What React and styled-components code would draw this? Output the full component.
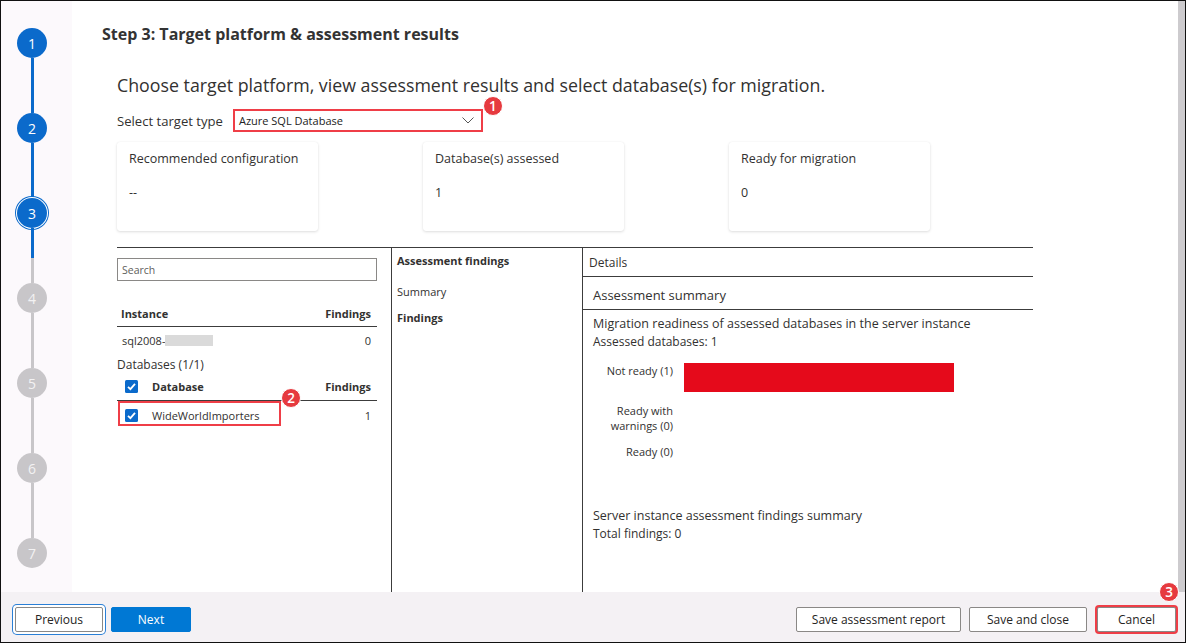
import styled, { createGlobalStyle } from 'styled-components';

const GlobalStyle = createGlobalStyle`
  html, body {
    margin: 0;
    padding: 0;
    background: #ffffff;
  }
  * {
    box-sizing: border-box;
  }
  body {
    font-family: "Open Sans", "Noto Sans", sans-serif;
    color: #323130;
  }
`;

const Frame = styled.div`
  width: 1186px;
  height: 643px;
  border: 1px solid #111;
  display: flex;
  flex-direction: column;
  overflow: hidden;
`;

const Body = styled.div`
  flex: 1;
  display: flex;
  min-height: 0;
`;

const Stepper = styled.div`
  width: 71px;
  background: #fcf9fc;
  display: flex;
  flex-direction: column;
  align-items: flex-start;
  padding: 27px 0 0 16px;
`;

const Step = styled.div`
  width: 30px;
  display: flex;
  flex-direction: column;
  align-items: center;
`;

const StepCircle = styled.div`
  width: 30px;
  height: 30px;
  border-radius: 50%;
  display: flex;
  align-items: center;
  justify-content: center;
  font-size: 14px;
  color: ${(p) => (p.$done ? '#ffffff' : '#f3f2f3')};
  background: ${(p) => (p.$done ? '#0b6acb' : '#c8c6c9')};
  box-shadow: ${(p) => (p.$current ? '0 0 0 1px #ffffff, 0 0 0 2px #0b6acb' : 'none')};
  flex-shrink: 0;
`;

const Connector = styled.div`
  width: 3px;
  height: 55px;
  background: ${(p) => p.$fill};
`;

const Main = styled.div`
  flex: 1;
  display: flex;
  flex-direction: column;
  padding: 23px 0 0 30px;
  min-width: 0;
`;

const Scrollbar = styled.div`
  width: 7px;
  background: #cdcbce;
`;

const StepTitle = styled.div`
  font-size: 16px;
  font-weight: 700;
  line-height: 20px;
  color: #333;
`;

const Content = styled.div`
  flex: 1;
  display: flex;
  flex-direction: column;
  margin-left: 15px;
  padding-top: 30px;
  min-height: 0;
`;

const Heading = styled.div`
  font-size: 17.8px;
  line-height: 22px;
  color: #323130;
`;

const SelectRow = styled.div`
  display: flex;
  align-items: center;
  gap: 10px;
  margin-top: 13px;
  font-size: 13.1px;
`;

const SelectBox = styled.div`
  position: relative;
  width: 250px;
  height: 23px;
  border: 2px solid #ef3e47;
  display: flex;
  align-items: center;
  justify-content: space-between;
  padding: 0 7px 0 4px;
  font-size: 11px;
  color: #222;
`;

const Badge = styled.div`
  position: absolute;
  width: 20px;
  height: 20px;
  border-radius: 50%;
  background: #e63a3f;
  border: 1px solid #ffffff;
  color: #ffffff;
  font-size: 13.5px;
  font-weight: 600;
  display: flex;
  align-items: center;
  justify-content: center;
  top: ${(p) => p.$top}px;
  right: ${(p) => p.$right}px;
`;

const Cards = styled.div`
  display: flex;
  gap: 105px;
  margin-top: 10px;
`;

const Card = styled.div`
  width: 201px;
  height: 89px;
  border-radius: 3px;
  background: #ffffff;
  box-shadow: 0 1px 3px rgba(0, 0, 0, 0.13), 0 0 1px rgba(0, 0, 0, 0.08);
  padding: 8px 12px;
  font-size: 12.5px;
  display: flex;
  flex-direction: column;
  gap: 17px;
`;

const Panels = styled.div`
  flex: 1;
  width: 916px;
  margin-top: 16px;
  border-top: 1px solid #3c3c3c;
  display: flex;
  min-height: 0;
`;

const LeftPane = styled.div`
  width: 275px;
  border-right: 1px solid #3c3c3c;
  padding: 10px 14px 0 0;
  font-size: 11px;
`;

const Search = styled.div`
  height: 23px;
  border: 1px solid #8a8886;
  padding: 0 4px;
  display: flex;
  align-items: center;
  color: #605e5c;
  font-size: 10.5px;
`;

const TableHead = styled.div`
  display: flex;
  align-items: center;
  justify-content: space-between;
  border-bottom: 1px solid #3c3c3c;
  height: ${(p) => p.$h}px;
  margin-top: ${(p) => p.$mt}px;
  padding: 0 6px 0 ${(p) => p.$pl}px;
  font-weight: 700;
  width: 260px;
`;

const TableRow = styled.div`
  display: flex;
  align-items: center;
  justify-content: space-between;
  height: ${(p) => p.$h}px;
  padding: 0 6px 0 ${(p) => p.$pl}px;
  width: 260px;
  position: relative;
`;

const Cell = styled.div`
  display: flex;
  align-items: center;
  gap: ${(p) => p.$gap || 0}px;
`;

const Redacted = styled.span`
  display: inline-block;
  width: 48px;
  height: 11px;
  background: #dadada;
`;

const GroupLabel = styled.div`
  font-size: 12px;
  margin-top: 4px;
  line-height: 16px;
`;

const Highlight = styled.div`
  position: absolute;
  left: 1px;
  top: 0;
  width: 163px;
  height: 25px;
  border: 2px solid #ef3e47;
`;

const MidPane = styled.div`
  width: 191px;
  border-right: 1px solid #3c3c3c;
  padding: 5px 5px;
  font-size: 11px;
  display: flex;
  flex-direction: column;
  gap: 11px;
`;

const NavItem = styled.div`
  font-weight: ${(p) => (p.$bold ? 700 : 400)};
  line-height: 15px;
  margin-top: ${(p) => p.$mt || 0}px;
`;

const DetailsPane = styled.div`
  flex: 1;
  display: flex;
  flex-direction: column;
`;

const DetailsHead = styled.div`
  height: 29px;
  border-bottom: 1px solid #3c3c3c;
  padding: 0 6px;
  display: flex;
  align-items: center;
  font-size: 12px;
`;

const SummaryHead = styled.div`
  height: 33px;
  border-bottom: 1px solid #3c3c3c;
  padding: 3px 10px 0 10px;
  display: flex;
  align-items: center;
  font-size: 13px;
`;

const Summary = styled.div`
  padding: 5px 10px;
  font-size: 12.5px;
  line-height: 18px;
`;

const SubLine = styled.div`
  font-size: 12px;
`;

const Chart = styled.div`
  display: grid;
  grid-template-columns: 80px 270px;
  column-gap: 11px;
  row-gap: 11px;
  margin-top: 12px;
  font-size: 11px;
  line-height: 15px;
`;

const ChartLabel = styled.div`
  text-align: right;
`;

const Bar = styled.div`
  height: ${(p) => p.$h}px;
  background: #e50a1b;
`;

const FindingsSummary = styled.div`
  margin-top: 48px;
`;

const Footer = styled.div`
  height: 50px;
  background: #f4f1f4;
  display: flex;
  align-items: center;
  padding: 4px 9px 0 14px;
  gap: 8px;
`;

const Spacer = styled.div`
  flex: 1;
`;

const Button = styled.button`
  position: relative;
  height: 25px;
  width: ${(p) => p.$w}px;
  margin-right: ${(p) => p.$mr || 0}px;
  font-family: inherit;
  font-size: 12px;
  border-radius: 2px;
  border: 1px solid ${(p) => (p.$primary ? '#0078d4' : '#8a8886')};
  background: ${(p) => (p.$primary ? '#0078d4' : '#ffffff')};
  color: ${(p) => (p.$primary ? '#ffffff' : '#252423')};
  box-shadow: ${(p) =>
    p.$focused ? '0 0 0 2px #ffffff, 0 0 0 3px #2a7fd6' : p.$flagged ? '0 0 0 2px #ef3e47' : 'none'};
  padding: 0;
`;

const Check = () => (
  <svg width="13" height="13" viewBox="0 0 13 13">
    <rect x="0" y="0" width="13" height="13" rx="1.5" fill="#0b6acb" />
    <path d="M3 6.8 L5.4 9.1 L10 3.9" stroke="#ffffff" strokeWidth="1.8" fill="none" />
  </svg>
);

const Chevron = () => (
  <svg width="12" height="7" viewBox="0 0 12 7">
    <path d="M0.5 0.5 L6 6 L11.5 0.5" stroke="#444" strokeWidth="0.9" fill="none" />
  </svg>
);

const steps = [1, 2, 3, 4, 5, 6, 7];

const connectorFill = (n) => {
  if (n < 3) return '#0b6acb';
  if (n === 3) return 'linear-gradient(#0b6acb 0 30px, #c8c6c9 30px)';
  return '#c8c6c9';
};

const cards = [
  ['Recommended configuration', '--'],
  ['Database(s) assessed', '1'],
  ['Ready for migration', '0'],
];

const App = () => {
  return (
    <>
      <GlobalStyle />
      <Frame>
        <Body>
          <Stepper>
            {steps.map((n) => (
              <Step key={n}>
                <StepCircle $done={n <= 3} $current={n === 3}>
                  {n}
                </StepCircle>
                {n < 7 && <Connector $fill={connectorFill(n)} />}
              </Step>
            ))}
          </Stepper>
          <Main>
            <StepTitle>Step 3: Target platform &amp; assessment results</StepTitle>
            <Content>
              <Heading>
                Choose target platform, view assessment results and select database(s) for migration.
              </Heading>
              <SelectRow>
                <span>Select target type</span>
                <SelectBox>
                  <span>Azure SQL Database</span>
                  <Chevron />
                  <Badge $top={-15} $right={-22}>1</Badge>
                </SelectBox>
              </SelectRow>
              <Cards>
                {cards.map(([label, value]) => (
                  <Card key={label}>
                    <div>{label}</div>
                    <div>{value}</div>
                  </Card>
                ))}
              </Cards>
              <Panels>
                <LeftPane>
                  <Search>Search</Search>
                  <TableHead $h={26} $mt={20} $pl={4}>
                    <span>Instance</span>
                    <span>Findings</span>
                  </TableHead>
                  <TableRow $h={26} $pl={5}>
                    <Cell>
                      sql2008-
                      <Redacted />
                    </Cell>
                    <span>0</span>
                  </TableRow>
                  <GroupLabel>Databases (1/1)</GroupLabel>
                  <TableHead $h={28} $mt={0} $pl={8}>
                    <Cell $gap={14}>
                      <Check />
                      <span>Database</span>
                    </Cell>
                    <span>Findings</span>
                  </TableHead>
                  <TableRow $h={28} $pl={8}>
                    <Highlight>
                      <Badge $top={-15} $right={-22}>2</Badge>
                    </Highlight>
                    <Cell $gap={14}>
                      <Check />
                      <span>WideWorldImporters</span>
                    </Cell>
                    <span>1</span>
                  </TableRow>
                </LeftPane>
                <MidPane>
                  <NavItem $bold>Assessment findings</NavItem>
                  <NavItem $mt={5}>Summary</NavItem>
                  <NavItem $bold>Findings</NavItem>
                </MidPane>
                <DetailsPane>
                  <DetailsHead>Details</DetailsHead>
                  <SummaryHead>Assessment summary</SummaryHead>
                  <Summary>
                    <div>Migration readiness of assessed databases in the server instance</div>
                    <SubLine>Assessed databases: 1</SubLine>
                    <Chart>
                      <ChartLabel>Not ready (1)</ChartLabel>
                      <Bar $h={29} />
                      <ChartLabel>
                        Ready with
                        <br />
                        warnings (0)
                      </ChartLabel>
                      <div />
                      <ChartLabel>Ready (0)</ChartLabel>
                      <div />
                    </Chart>
                    <FindingsSummary>
                      <div>Server instance assessment findings summary</div>
                      <SubLine>Total findings: 0</SubLine>
                    </FindingsSummary>
                  </Summary>
                </DetailsPane>
              </Panels>
            </Content>
          </Main>
          <Scrollbar />
        </Body>
        <Footer>
          <Button $w={88} $focused>Previous</Button>
          <Button $w={80} $primary>Next</Button>
          <Spacer />
          <Button $w={165}>Save assessment report</Button>
          <Button $w={118} $mr={2}>Save and close</Button>
          <Button $w={79} $flagged>
            Cancel
            <Badge $top={-26} $right={-4}>3</Badge>
          </Button>
        </Footer>
      </Frame>
    </>
  );
};

export default App;
